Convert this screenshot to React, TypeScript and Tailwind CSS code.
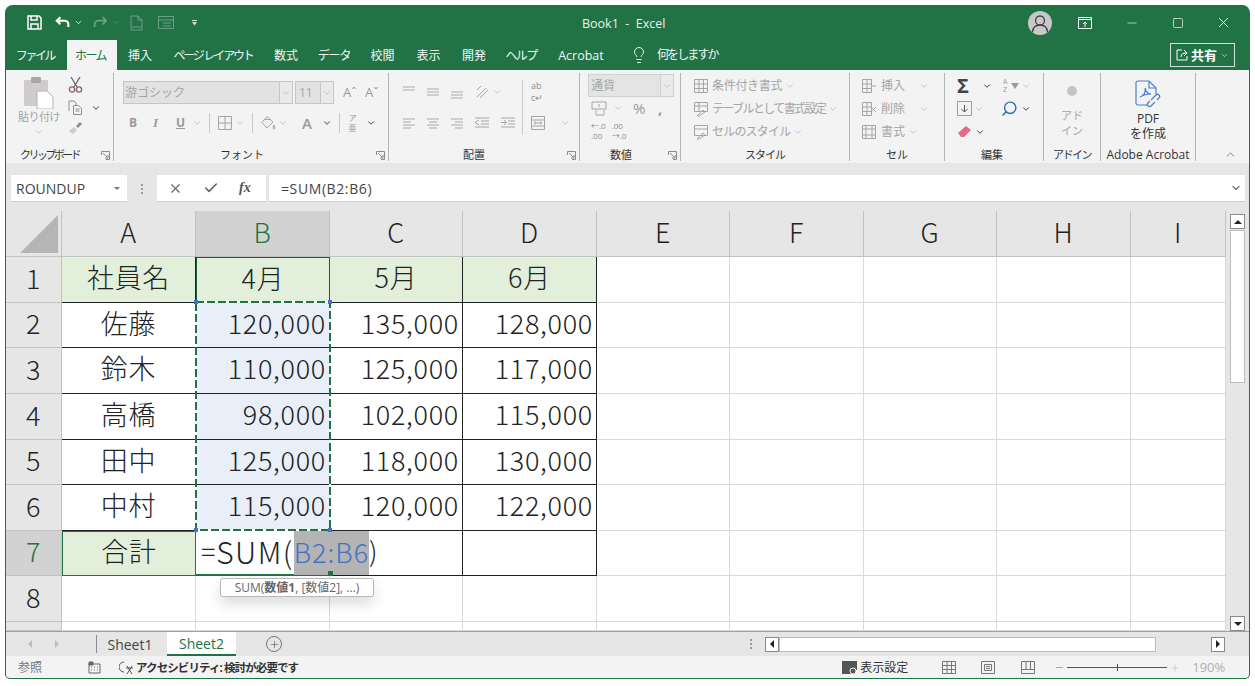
import {
  ChevronDown,
  ChevronUp,
  Check,
  Lightbulb,
  Minus,
  Plus,
  Search,
  Square,
  X,
} from "lucide-react";
import type { ReactNode } from "react";

const Chev = ({ dark = false, className = "" }: { dark?: boolean; className?: string }) => (
  <ChevronDown size={10} strokeWidth={dark ? 2.4 : 1.5} className={`shrink-0 ${dark ? "text-[#444]" : "text-[#a8a8a8]"} ${className}`} />
);

const Launcher = () => (
  <svg width="9" height="9" viewBox="0 0 9 9" className="shrink-0 text-[#8a8a8a]" fill="none" stroke="currentColor">
    <path d="M.5 4V.5h8v8H5M2 2l5 5M7 4v3H4" />
  </svg>
);

const GroupLabel = ({ children, launcher = false, pad = "" }: { children: ReactNode; launcher?: boolean; pad?: string }) => (
  <div className={`relative flex h-[16px] items-end justify-center text-[11px] leading-[12px] text-[#333] ${pad}`}>
    <span>{children}</span>
    {launcher && (
      <span className="absolute right-[3px] top-[6px]">
        <Launcher />
      </span>
    )}
  </div>
);

const Group = ({ w, label, launcher, pad, children }: { w: string; label: ReactNode; launcher?: boolean; pad?: string; children: ReactNode }) => (
  <div className={`flex h-[88px] shrink-0 flex-col justify-between border-r border-[#b4b4b4] ${w}`}>
    <div className="flex-1 overflow-hidden">{children}</div>
    <GroupLabel launcher={launcher} pad={pad}>
      {label}
    </GroupLabel>
  </div>
);

const Lines = ({ kind }: { kind: "top" | "mid" | "bot" | "left" | "center" | "right" }) => {
  const d: Record<string, string> = {
    top: "M1 2h12M1 5h12",
    mid: "M1 4h12M1 7h12M1 10h12",
    bot: "M1 7h12M1 10h12M1 13h12",
    left: "M1 3h12M1 6h8M1 9h12M1 12h8",
    center: "M1 3h12M3 6h8M1 9h12M3 12h8",
    right: "M1 3h12M5 6h8M1 9h12M5 12h8",
  };
  return (
    <svg width="14" height="15" viewBox="0 0 14 15" fill="none" stroke="#a9a9a9" className="shrink-0">
      <path d={d[kind]} />
    </svg>
  );
};

const GrayIcon = ({ d }: { d: string }) => (
  <svg width="16" height="16" viewBox="0 0 16 16" fill="none" stroke="#a5a5a5" className="shrink-0">
    <path d={d} />
  </svg>
);

const gridIcon = "M1.5 1.5h13v13h-13zM1.5 6h13M1.5 10.5h13M6 1.5v13M10.5 1.5v13";

const Clipboard = () => (
  <Group w="w-[108px]" label={<span className="tracking-[-2.600px]">クリップボード</span>} launcher pad="pr-[20px]">
    <div className="flex pl-[11px] pt-[4px]">
      <div className="flex w-[44px] flex-col items-center">
        <svg width="32" height="32" viewBox="0 0 32 32">
          <rect x="1" y="3" width="24" height="26" rx="1" fill="#cfcbcf" />
          <rect x="8" y="0" width="10" height="6" rx="1" fill="#a9a6a9" />
          <path d="M14 14h10l6 6v12H14z" fill="#fff" stroke="#b5b5b5" />
        </svg>
        <span className="mt-[1px] text-[11px] leading-[14px] tracking-[-0.500px] text-[#a3a3a3]">貼り付け</span>
        <Chev className="mt-[3px]" />
      </div>
      <div className="ml-[7px] flex flex-col items-start gap-[7px]">
        <svg width="15" height="16" viewBox="0 0 15 16" fill="none" className="shrink-0">
          <path d="M3 0l6 10M12 0L6 10" stroke="#6e6e6e" strokeWidth="1.400" />
          <circle cx="4" cy="12.500" r="2.600" stroke="#8c6470" strokeWidth="1.400" />
          <circle cx="11" cy="12.500" r="2.600" stroke="#8c6470" strokeWidth="1.400" />
        </svg>
        <div className="flex items-center gap-[9px]">
          <svg width="14" height="15" viewBox="0 0 14 15" fill="none" stroke="#8e8e8e" className="shrink-0">
            <path d="M1 11V1h5l2 2v2" />
            <path d="M5.500 5.500h5l3 3v6h-8zM7.500 9h4M7.500 11h4" fill="#f3f3f3" />
          </svg>
          <Chev dark />
        </div>
        <svg width="13" height="12" viewBox="0 0 13 12" className="ml-[1px]">
          <path d="M0 9l5-4 3 3-4 4z" fill="#cdcdcd" />
          <path d="M7 4l4-4 2 2-4 4z" fill="#8d8d8d" />
        </svg>
      </div>
    </div>
  </Group>
);

const Font = () => (
  <Group w="w-[275px]" label="フォント" launcher pad="pr-[18px]">
    <div className="mt-[8px] flex h-[23px] items-center pl-[9px]">
      <div className="flex h-[23px] w-[170px] items-center justify-between border border-[#c6c6c6] bg-[#e2e2e2] text-[12px] text-[#a5a5a5]">
        <span className="pl-[1px]">游ゴシック</span>
        <span className="flex h-full w-[13px] items-center justify-center border-l border-[#c6c6c6] bg-[#eaeaea]">
          <Chev />
        </span>
      </div>
      <div className="ml-[2px] flex h-[23px] w-[39px] items-center justify-between border border-[#c6c6c6] bg-[#e2e2e2] text-[12px] text-[#a5a5a5]">
        <span className="pl-[3px]">11</span>
        <span className="flex h-full w-[13px] items-center justify-center border-l border-[#c6c6c6] bg-[#eaeaea]">
          <Chev />
        </span>
      </div>
      <span className="ml-[9px] w-[22px] text-[13px] text-[#9a9a9a]">Aˆ</span>
      <span className="w-[20px] text-[13px] text-[#9a9a9a]">Aˇ</span>
    </div>
    <div className="mt-[8px] flex h-[22px] items-center pl-[15px] text-[#9a9a9a]">
      <span className="w-[24px] text-[12px] font-bold">B</span>
      <span className="w-[23px] font-['Liberation_Serif',serif] text-[13px] font-bold italic">I</span>
      <span className="w-[16px] text-[12px] font-bold underline">U</span>
      <Chev />
      <span className="mx-[7px] h-[20px] w-px bg-[#c9c9c9]" />
      <GrayIcon d="M1.5 1.5h13v13h-13zM1.5 8h13M8 1.5v13" />
      <Chev className="ml-[2px]" />
      <span className="mx-[7px] h-[20px] w-px bg-[#c9c9c9]" />
      <GrayIcon d="M7 1.500L2 7.500l5 5.500 6-6zM5 4.500h6M14 10l1 3a1 1 0 0 1-2 0z" />
      <Chev className="ml-[2px]" />
      <span className="ml-[14px] w-[16px] text-[15px] font-semibold">A</span>
      <Chev dark className="ml-[4px]" />
      <span className="mx-[7px] h-[20px] w-px bg-[#c9c9c9]" />
      <span className="flex w-[11px] flex-col items-center text-[8px] leading-[10px]">
        <span>ア</span>
        <span>亜</span>
      </span>
      <Chev dark className="ml-[8px]" />
    </div>
  </Group>
);

const Alignment = () => (
  <Group w="w-[191px]" label="配置" launcher pad="pr-[20px]">
    <div className="flex h-[31px] items-end pb-[4px] pl-[13px]">
      <div className="flex w-[120px] items-center gap-[10px]">
        <Lines kind="top" />
        <Lines kind="mid" />
        <Lines kind="bot" />
        <GrayIcon d="M3 13L12 4M6 14l8-8M3 6l4-4" />
        <Chev className="-ml-[8px]" />
      </div>
      <span className="mb-[-12px] h-[32px] w-px bg-[#c9c9c9]" />
      <span className="-mb-[3px] ml-[8px] flex flex-col gap-[1px] text-[9px] leading-[11px] text-[#8e8e8e]">
        <span>ab</span>
        <span>c↵</span>
      </span>
    </div>
    <div className="mt-[8px] flex h-[22px] items-center pl-[13px]">
      <div className="flex w-[120px] items-center gap-[10px]">
        <Lines kind="left" />
        <Lines kind="center" />
        <Lines kind="right" />
        <GrayIcon d="M1 3h14M7 6h8M7 9h8M1 12h14M5 5L1 7.500 5 10" />
        <GrayIcon d="M1 3h14M8 6h7M8 9h7M1 12h14M1 7.500h5M4 5l2.500 2.500L4 10" />
      </div>
      <span className="h-[24px] w-px bg-[#c9c9c9]" />
      <span className="ml-[7px]">
        <GrayIcon d="M1.500 1.500h13v13h-13zM1.500 5h13M1.500 11h13M4 8h8M5.500 6.500L4 8l1.500 1.500M10.500 6.500L12 8l-1.500 1.500" />
      </span>
      <Chev className="ml-[14px]" />
    </div>
  </Group>
);

const NumberGroup = () => (
  <Group w="w-[101px]" label="数値" launcher pad="pr-[18px]">
    <div className="pl-[8px] pt-[1px]">
      <div className="flex h-[23px] w-[86px] items-center justify-between border border-[#d0d0d0] bg-[#e4e4e4] text-[12px] text-[#a5a5a5]">
        <span className="pl-[2px]">通貨</span>
        <span className="flex h-full w-[13px] items-center justify-center border-l border-[#d0d0d0] bg-[#eaeaea]">
          <Chev />
        </span>
      </div>
      <div className="mt-[1px] flex h-[20px] items-center pl-[3px] text-[#9a9a9a]">
        <GrayIcon d="M1 2h14v7H1zM5 10v5h8v-5M8 4v3" />
        <Chev className="ml-[6px]" />
        <span className="ml-[10px] w-[25px] text-[15px] leading-none">%</span>
        <span className="text-[15px] font-bold leading-none">,</span>
      </div>
      <div className="mt-[3px] flex items-center gap-[6px] pl-[3px] text-[8px] leading-[10px] text-[#8e8e8e]">
        <span className="flex flex-col">
          <span>←.0</span>
          <span>.00</span>
        </span>
        <span className="flex flex-col">
          <span>.00</span>
          <span>→.0</span>
        </span>
      </div>
    </div>
  </Group>
);

const IconText = ({ d, text, track }: { d: string; text: string; track: string }) => (
  <div className="flex h-[23px] items-center whitespace-nowrap text-[12px] text-[#a5a5a5]">
    <GrayIcon d={d} />
    <span className={`ml-[3px] ${track}`}>{text}</span>
    <Chev className="ml-[3px]" />
  </div>
);

const Styles = () => (
  <Group w="w-[169px]" label={<span className="tracking-[-1px]">スタイル</span>}>
    <div className="pl-[12px] pt-px">
      <IconText d={gridIcon} text="条件付き書式" track="tracking-[-0.300px]" />
      <IconText d="M1.500 1.500h13v9h-13zM1.500 5h13M6 1.500v9M4 15l6-6 2 2-6 4z" text="テーブルとして書式設定" track="tracking-[-1.600px]" />
      <IconText d="M1.500 1.500h13v10h-13zM1.500 5h13M4 15l6-6 2 2-6 4z" text="セルのスタイル" track="tracking-[-0.800px]" />
    </div>
  </Group>
);

const Cells = () => (
  <Group w="w-[95px]" label="セル">
    <div className="pl-[11px] pt-px">
      <div className="flex h-[23px] items-center text-[12px] text-[#a5a5a5]">
        <GrayIcon d="M1.500 1.500h9v13h-9zM1.500 6h9M1.500 10.500h9M6 1.500v13M10 8h5" />
        <span className="ml-[4px] w-[38px]">挿入</span>
        <Chev />
      </div>
      <div className="flex h-[23px] items-center text-[12px] text-[#a5a5a5]">
        <GrayIcon d="M1.500 1.500h9v13h-9zM1.500 6h9M1.500 10.500h9M6 1.500v13M10 6l5 5M15 6l-5 5" />
        <span className="ml-[4px] w-[38px]">削除</span>
        <Chev />
      </div>
      <div className="flex h-[23px] items-center text-[12px] text-[#a5a5a5]">
        <GrayIcon d="M1.500 1.500h13v13h-13zM1.500 5h13M1.500 11h13M5 1.500v13M11 1.500v13" />
        <span className="ml-[4px]">書式</span>
        <Chev className="ml-[3px]" />
      </div>
    </div>
  </Group>
);

const Editing = () => (
  <Group w="w-[99px]" label="編集" pad="pr-[4px]">
    <div className="pl-[12px] pt-px">
      <div className="flex h-[23px] items-center">
        <span className="w-[16px] text-[20px] font-bold leading-none text-[#444]">Σ</span>
        <Chev dark className="ml-[9px]" />
        <span className="ml-[11px] flex w-[8px] flex-col text-[7px] leading-[8px] text-[#9a9a9a]">
          <span>A</span>
          <span>Z</span>
        </span>
        <span className="h-0 w-0 border-x-[4px] border-t-[6px] border-x-transparent border-t-[#9a9a9a]" />
        <Chev className="ml-[2px]" />
      </div>
      <div className="flex h-[23px] items-center">
        <svg width="15" height="15" viewBox="0 0 15 15" fill="none" stroke="#9c9c9c" className="shrink-0">
          <path d="M.5 .5h14v14H.5z" />
          <path d="M7.500 4v7M4.500 8l3 3 3-3" stroke="#555" />
        </svg>
        <Chev className="ml-[2px]" />
        <Search size={17} strokeWidth={2} className="ml-[17px] -scale-x-100 text-[#2b6fc0]" />
        <Chev dark className="ml-[3px]" />
      </div>
      <div className="flex h-[23px] items-center">
        <svg width="15" height="13" viewBox="0 0 15 13" className="shrink-0">
          <path d="M1 8l8-7 5 4-7 7H4z" fill="#e46c85" />
        </svg>
        <Chev dark className="ml-[3px]" />
      </div>
    </div>
  </Group>
);

const Addin = () => (
  <Group w="w-[57px]" label={<span className="tracking-[-1.500px]">アドイン</span>}>
    <div className="flex flex-col items-center pt-[13px]">
      <span className="h-[10px] w-[10px] rounded-full bg-[#c4c4c4]" />
      <span className="mt-[12px] text-center text-[11px] leading-[15px] text-[#a5a5a5]">
        アド
        <br />
        イン
      </span>
    </div>
  </Group>
);

const Acrobat = () => (
  <Group w="w-[95px]" label={<span className="whitespace-nowrap text-[12px]">Adobe Acrobat</span>}>
    <div className="flex flex-col items-center pt-[7px]">
      <svg width="26" height="28" viewBox="0 0 26 28" fill="none" stroke="#4a7fcf" strokeWidth="1.200">
        <path d="M12 25H3a2 2 0 0 1-2-2V3a2 2 0 0 1 2-2h11l7 7v6" />
        <path d="M14 1v7h7M5 17c4-1 6-5 5-9 1 4 3 6 6 6-4 0-8 1-11 3z" />
        <path d="M16 20l5-5a2 2 0 0 1 3 3l-2 2M20 22l-4 4a2 2 0 0 1-3-3l2-2" />
      </svg>
      <span className="mt-[3px] text-center text-[12px] leading-[15px] text-[#333]">
        PDF
        <br />
        を作成
      </span>
    </div>
  </Group>
);

const TitleBar = () => (
  <div className="relative flex h-[35px] shrink-0 items-center text-[#e8f1ec]">
    <div className="flex items-center pl-[21px]">
      <svg width="15" height="15" viewBox="0 0 15 15" fill="none" stroke="white" strokeWidth="1.500">
        <path d="M1 1h11l2 2v11H1zM4 1v4h6V1M4 14V9h7v5" />
      </svg>
      <svg width="16" height="13" viewBox="0 0 18 14" fill="none" stroke="white" strokeWidth="2.400" className="ml-[13px]">
        <path d="M6 1L2 5l4 4M2 5h9a4 4 0 0 1 4 4v3" />
      </svg>
      <ChevronDown size={9} strokeWidth={2} className="ml-[3px] text-white" />
      <svg width="16" height="13" viewBox="0 0 18 14" fill="none" stroke="#6d9f84" strokeWidth="2" className="ml-[9px]">
        <path d="M12 1l4 4-4 4M16 5H7a4 4 0 0 0-4 4v3" />
      </svg>
      <ChevronDown size={9} strokeWidth={1.500} className="ml-[3px] text-[#6d9f84]" />
      <svg width="13" height="16" viewBox="0 0 13 16" fill="none" stroke="#6d9f84" className="ml-[10px]">
        <path d="M1 1h7l4 4v10H1zM8 1v4h4M2 12h9" />
      </svg>
      <svg width="16" height="13" viewBox="0 0 16 13" fill="none" stroke="#6d9f84" className="ml-[15px]">
        <path d="M.5 .5h15v12H.5zM.5 4h15M5 7h8M5 10h8" />
      </svg>
      <svg width="5" height="6" viewBox="0 0 5 6" className="ml-[18px]" fill="#cfe0d6">
        <path d="M0 0h5v1H0zM0 2h5L2.500 5.500z" />
      </svg>
    </div>
    <span className="absolute left-[576px] top-[12px] whitespace-nowrap text-[12.500px] leading-[14px]">Book1&nbsp;&nbsp;-&nbsp;&nbsp;Excel</span>
    <div className="ml-auto flex items-center pr-[17px]">
      <svg width="24" height="24" viewBox="0 0 24 24" fill="none" stroke="#444" strokeWidth="1.300" className="rounded-full bg-[#c8c8c8]">
        <circle cx="12" cy="9.500" r="4.500" />
        <path d="M4.500 21c.5-5 3.500-7 7.500-7s7 2 7.500 7" />
      </svg>
      <svg width="14" height="12" viewBox="0 0 14 12" fill="none" stroke="white" className="ml-[26px]">
        <path d="M.5 .5h13v11H.5zM.5 2.500h13M7 10V5M5 7l2-2 2 2" />
      </svg>
      <Minus size={14} strokeWidth={1} className="ml-[33px] text-white" />
      <Square size={12} strokeWidth={1.300} className="ml-[33px] text-white" />
      <X size={17} strokeWidth={1.200} className="ml-[31px] text-white" />
    </div>
  </div>
);

const tabs = [
  ["ファイル", "w-[61px] pr-[3px] tracking-[-2.400px]"],
  ["ホーム", "w-[50px] pr-[3px] tracking-[-1.600px]"],
  ["挿入", "w-[46px]"],
  ["ページ レイアウト", "w-[100px] tracking-[-2.200px]"],
  ["数式", "w-[46px]"],
  ["データ", "w-[50px] tracking-[-1.200px]"],
  ["校閲", "w-[47px]"],
  ["表示", "w-[45px]"],
  ["開発", "w-[46px]"],
  ["ヘルプ", "w-[48px] tracking-[-1.600px]"],
  ["Acrobat", "w-[66px] pl-[6px] text-[12.500px]"],
];

const TabBar = () => (
  <div className="flex h-[30px] shrink-0 items-end text-[12px] text-[#f1f6f3]">
    {tabs.map(([name, cls]) => (
      <div
        key={name}
        className={`flex h-[30px] shrink-0 items-center justify-center whitespace-nowrap pt-[2px] ${cls} ${name === "ホーム" ? "bg-[#f3f3f3] text-[#217346]" : ""}`}
      >
        {name}
      </div>
    ))}
    <Lightbulb size={18} strokeWidth={1.200} className="mb-[6px] ml-[19px] text-white" />
    <span className="mb-[6px] ml-[9px] tracking-[-1.900px]">何をしますか</span>
    <div className="mb-[3px] ml-auto mr-[14px] flex h-[24px] w-[65px] items-center justify-center gap-[3px] border border-[#cfe0d6] font-bold text-white">
      <svg width="12" height="12" viewBox="0 0 12 12" fill="none" stroke="white">
        <path d="M6 1H1v10h10V7M5 8c0-3 2-4 5-4M8 1l3 3-3 3" />
      </svg>
      <span className="text-[13px] leading-none">共有</span>
      <ChevronDown size={9} strokeWidth={1.500} />
    </div>
  </div>
);

const Ribbon = () => (
  <div className="flex h-[93px] shrink-0 bg-[#f3f3f3] pt-[3px]">
    <Clipboard />
    <Font />
    <Alignment />
    <NumberGroup />
    <Styles />
    <Cells />
    <Editing />
    <Addin />
    <Acrobat />
    <div className="flex flex-1 items-end justify-end pb-[2px] pr-[12px]">
      <ChevronUp size={13} strokeWidth={1.300} className="text-[#555]" />
    </div>
  </div>
);

const FormulaBar = () => (
  <div className="flex h-[48px] shrink-0 items-start bg-[#e6e6e6] pl-[5px] pr-[4px] pt-[12px]">
    <div className="flex h-[27px] w-[116px] items-center justify-between border-b border-[#d0d0d0] bg-white pl-[5px] pr-[7px] text-[14px] text-[#444]">
      ROUNDUP
      <span className="h-0 w-0 border-x-[3px] border-t-[3px] border-x-transparent border-t-[#777]" />
    </div>
    <div className="flex h-[27px] w-[30px] flex-col items-center justify-center gap-[2px]">
      <span className="h-[2px] w-[2px] bg-[#999]" />
      <span className="h-[2px] w-[2px] bg-[#999]" />
      <span className="h-[2px] w-[2px] bg-[#999]" />
    </div>
    <div className="flex h-[27px] w-[109px] items-center border-b border-[#d0d0d0] bg-white pl-[11px]">
      <X size={15} strokeWidth={1.800} className="text-[#666]" />
      <Check size={16} strokeWidth={2.400} className="ml-[20px] text-[#666]" />
      <span className="ml-[20px] font-['Liberation_Serif',serif] text-[14px] font-bold italic leading-none text-[#555]">fx</span>
    </div>
    <div className="ml-[3px] flex h-[27px] flex-1 items-center justify-between border-b border-[#d0d0d0] bg-white pl-[12px] pr-[3px] text-[14px] tracking-[0.600px] text-[#444]">
      =SUM(B2:B6)
      <ChevronDown size={12} strokeWidth={2.500} className="text-[#777]" />
    </div>
  </div>
);

const colNames = ["A", "B", "C", "D", "E", "F", "G", "H", "I"];

const data: string[][] = [
  ["社員名", "4月", "5月", "6月"],
  ["佐藤", "120,000", "135,000", "128,000"],
  ["鈴木", "110,000", "125,000", "117,000"],
  ["高橋", "98,000", "102,000", "115,000"],
  ["田中", "125,000", "118,000", "130,000"],
  ["中村", "115,000", "120,000", "122,000"],
];

const cellFont = "font-['Noto_Sans_CJK_JP',sans-serif] font-light";

const emptyCell = "border-b border-r border-[#d9d9d9] bg-white";

const cellClass = (r: number, c: number) => {
  if (r === 0 && c === 1) return "border border-[#1e5b3a] bg-[#e2efda] justify-center";
  if (r === 0) return "border-b border-r border-[#222] bg-[#e2efda] justify-center";
  if (c === 0) return "border-b border-r border-[#222] bg-white justify-center";
  if (c === 1) return "border-b border-r border-[#222] bg-[#e8eff9] justify-end pr-[3px]";
  return "border-b border-r border-[#222] bg-white justify-end pr-[3px]";
};

const Sheet = () => (
  <div className="flex h-[420px] shrink-0 bg-[#e6e6e6]">
    <div className={`relative grid w-[1220px] shrink-0 grid-cols-[56px_134px_134px_133px_134px_133px_134px_133px_134px_95px] grid-rows-[46px_46px_45px_46px_46px_45px_46px_45px_46px_9px] overflow-hidden text-[27px] tracking-[0.700px] text-[#222] ${cellFont}`}>
      <div className="flex items-end justify-end border-b border-r border-[#c2c2c2] bg-[#e6e6e6] p-[3px]">
        <span className="h-0 w-0 border-b-[38px] border-l-[38px] border-b-[#b5b5b5] border-l-transparent" />
      </div>
      {colNames.map((c) => (
        <div
          key={c}
          className={`flex items-center justify-center border-b border-r border-[#c2c2c2] pb-[3px] ${c === "B" ? "bg-[#d2d2d2] text-[#217346]" : "bg-[#e6e6e6]"}`}
        >
          {c}
        </div>
      ))}
      {data.map((row, r) => (
        <div key={r} className="contents">
          <div className="flex items-center justify-center border-b border-r border-[#c2c2c2] bg-[#e6e6e6] pb-[3px]">{r + 1}</div>
          {row.map((v, c) => (
            <div key={c} className={`flex items-center whitespace-nowrap pb-[4px] ${cellClass(r, c)}`}>
              {v}
            </div>
          ))}
          {[0, 1, 2, 3, 4].map((i) => (
            <div key={i} className={emptyCell} />
          ))}
        </div>
      ))}
      <div className="flex items-center justify-center border-b border-r border-[#c2c2c2] bg-[#d2d2d2] pb-[3px] text-[#217346]">7</div>
      <div className="flex items-center justify-center border border-[#217346] bg-[#e2efda] pb-[4px]">合計</div>
      <div className="relative z-10 flex items-center whitespace-nowrap border-b-2 border-b-[#217346] bg-white pb-[3px] pl-[5px]">
        <span className="inline-block w-[18px]">=</span>
        <span className="text-[30px] leading-[38px] tracking-[1.500px]">SUM(</span>
        <span className="-mb-[3px] bg-[#b4b4b4] pb-[3px] leading-[41px] tracking-[1px] text-[#4472c4]">B2:B6</span>
        <span>)</span>
        <span className="absolute -bottom-[2px] -right-[3px] h-[5px] w-[5px] bg-[#217346]" />
      </div>
      <div className="border-b border-r border-[#222] bg-white" />
      <div className="border-b border-r border-[#222] bg-white" />
      {[0, 1, 2, 3, 4].map((i) => (
        <div key={i} className={emptyCell} />
      ))}
      {[8, 9].map((n) => (
        <div key={n} className="contents">
          <div className="flex items-center justify-center border-b border-r border-[#c2c2c2] bg-[#e6e6e6] pb-[3px]">{n === 8 ? "8" : ""}</div>
          {colNames.map((c) => (
            <div key={c} className={emptyCell} />
          ))}
        </div>
      ))}
      <svg className="pointer-events-none absolute left-[188px] top-[88px] z-20 h-[235px] w-[138px]" viewBox="0 0 138 235" fill="none">
        <rect x="2" y="3" width="134" height="228" stroke="white" strokeWidth="2" />
        <rect x="2" y="3" width="134" height="228" stroke="#217346" strokeWidth="2" strokeDasharray="8 3" />
        <rect x="0" y="1" width="4" height="4" fill="#4472c4" />
        <rect x="134" y="1" width="4" height="4" fill="#4472c4" />
        <rect x="0" y="229" width="4" height="4" fill="#4472c4" />
        <rect x="134" y="229" width="4" height="4" fill="#4472c4" />
      </svg>
      <div className="absolute left-[214px] top-[367px] z-20 flex h-[19px] w-[154px] items-center justify-center whitespace-nowrap rounded-[3px] border border-[#b8b8b8] bg-white font-['Open_Sans','Noto_Sans_CJK_JP',sans-serif] text-[12px] font-normal leading-none tracking-normal text-[#666] shadow-[0_7px_14px_rgba(0,0,0,0.14)]">
        SUM(<b>数値1</b>, [数値2], ...)
      </div>
    </div>
    <div className="flex flex-1 flex-col items-center pt-[3px]">
      <div className="flex h-[15px] w-[15px] items-center justify-center border border-[#8a8a8a] bg-white">
        <span className="h-0 w-0 border-x-[4px] border-b-[4px] border-x-transparent border-b-[#222]" />
      </div>
      <div className="mt-px h-[153px] w-[15px] border border-[#bdbdbd] bg-white" />
      <div className="mt-auto flex h-[15px] w-[15px] items-center justify-center border border-[#8a8a8a] bg-white">
        <span className="h-0 w-0 border-x-[4px] border-t-[4px] border-x-transparent border-t-[#222]" />
      </div>
    </div>
  </div>
);

const SheetTabs = () => (
  <div className="flex h-[25px] shrink-0 items-center border-t border-[#a0a0a0] bg-[#e6e6e6] text-[14px] text-[#444]">
    <span className="ml-[22px] h-0 w-0 border-y-[4px] border-r-[4px] border-y-transparent border-r-[#bdbdbd]" />
    <span className="ml-[23px] h-0 w-0 border-y-[4px] border-l-[4px] border-y-transparent border-l-[#bdbdbd]" />
    <span className="ml-[37px] h-[18px] w-px bg-[#8a8a8a]" />
    <span className="flex w-[70px] justify-center pr-[4px]">Sheet1</span>
    <span className="flex h-full w-[69px] justify-center border-b-2 border-b-[#217346] bg-white pt-[1px] leading-[21px] text-[#217346]">Sheet2</span>
    <span className="ml-[30px] flex h-[16px] w-[16px] items-center justify-center rounded-full border border-[#777]">
      <Plus size={11} strokeWidth={1.500} className="text-[#666]" />
    </span>
    <span className="ml-[468px] flex flex-col gap-[2px]">
      <span className="h-[2px] w-[2px] bg-[#999]" />
      <span className="h-[2px] w-[2px] bg-[#999]" />
      <span className="h-[2px] w-[2px] bg-[#999]" />
    </span>
    <span className="ml-[13px] flex h-[15px] w-[14px] items-center justify-center border border-[#8a8a8a] bg-white">
      <span className="h-0 w-0 border-y-[4px] border-r-[4px] border-y-transparent border-r-[#222]" />
    </span>
    <span className="h-[15px] w-[377px] border border-[#bdbdbd] bg-white" />
    <span className="ml-[55px] flex h-[15px] w-[14px] items-center justify-center border border-[#8a8a8a] bg-white">
      <span className="h-0 w-0 border-y-[4px] border-l-[4px] border-y-transparent border-l-[#222]" />
    </span>
  </div>
);

const StatusBar = () => (
  <div className="flex flex-1 items-center bg-[#f3f3f3] pt-[1px] text-[12px] text-[#555]">
    <span className="ml-[12px] text-[#777]">参照</span>
    <svg width="13" height="13" viewBox="0 0 13 13" className="ml-[46px]" fill="none" stroke="#666">
      <path d="M1 3h11v9H1z" />
      <path d="M1 1h4v3H1z" fill="#666" />
      <path d="M3 6h1M6 6h1M9 6h1M3 9h1M6 9h1M9 9h1" />
    </svg>
    <svg width="15" height="15" viewBox="0 0 15 15" className="ml-[18px]" fill="none" stroke="#555">
      <path d="M5 2a5 5 0 0 0 0 10M8 6l5 8M13 6l-5 8M7 8h7" />
    </svg>
    <span className="ml-[2px] whitespace-nowrap text-[11.500px] font-bold tracking-[-0.900px] text-[#333]">アクセシビリティ: 検討が必要です</span>
    <svg width="16" height="14" viewBox="0 0 16 14" className="ml-[544px]">
      <path d="M0 0h15v9H9v4H0z" fill="#555" />
      <circle cx="11" cy="10" r="3" fill="#555" stroke="#f3f3f3" />
    </svg>
    <span className="ml-[2px] whitespace-nowrap text-[12px] text-[#333]">表示設定</span>
    <svg width="14" height="13" viewBox="0 0 14 13" className="ml-[34px]" fill="none" stroke="#777">
      <path d="M.5 .5h13v12H.5zM.5 4.500h13M.5 8.500h13M5 .5v12M9.500 .5v12" />
    </svg>
    <svg width="14" height="13" viewBox="0 0 14 13" className="ml-[25px]" fill="none" stroke="#777">
      <path d="M.5 .5h13v12H.5zM3.500 3.500h7v6h-7zM5 5.500h4M5 7.500h4" />
    </svg>
    <svg width="14" height="13" viewBox="0 0 14 13" className="ml-[26px]" fill="none" stroke="#777">
      <path d="M.5 .5h13v12H.5zM.5 8.500h13M5 .5v8M9.500 .5v8" />
    </svg>
    <span className="ml-[21px] h-px w-[7px] bg-[#a5a5a5]" />
    <span className="relative ml-[4px] h-px w-[100px] bg-[#555]">
      <span className="absolute left-[50px] top-[-3px] h-[7px] w-px bg-[#555]" />
    </span>
    <Plus size={10} strokeWidth={1} className="ml-[3px] text-[#a5a5a5]" />
    <span className="ml-[12px] text-[13px] text-[#b0b0b0]">190%</span>
  </div>
);

export default function App() {
  return (
    <div className="h-[686px] w-[1255px] overflow-hidden bg-white pl-[5px] pt-[5px] font-['Open_Sans','Noto_Sans_CJK_JP',sans-serif]">
      <div className="flex h-[674px] w-[1245px] flex-col overflow-hidden rounded-t-[8px] rounded-b-[5px] border-x border-b border-[#217346] bg-[#217346]">
        <TitleBar />
        <TabBar />
        <Ribbon />
        <FormulaBar />
        <Sheet />
        <SheetTabs />
        <StatusBar />
      </div>
    </div>
  );
}
